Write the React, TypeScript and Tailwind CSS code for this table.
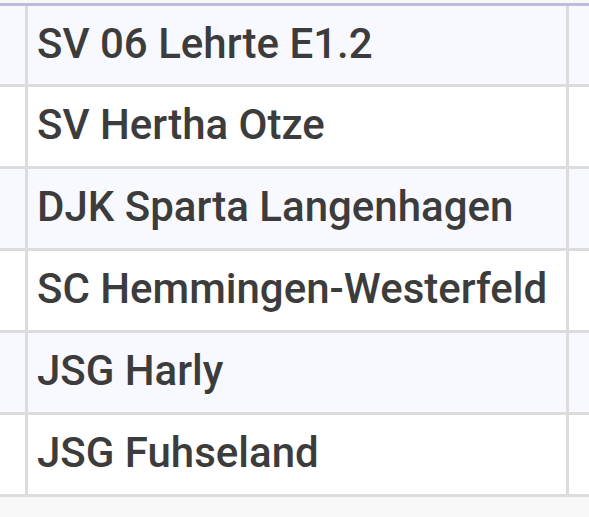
const teams = [
  'SV 06 Lehrte E1.2',
  'SV Hertha Otze',
  'DJK Sparta Langenhagen',
  'SC Hemmingen-Westerfeld',
  'JSG Harly',
  'JSG Fuhseland',
];

export default function App() {
  return (
    <div className="w-[589px] h-[517px] overflow-hidden bg-[#f8f8f8] pt-[3px] font-['Roboto',sans-serif]">
      <div className="border-t-[3px] border-[#bcbcde]">
        {teams.map((name, i) => (
          <div
            key={name}
            className={`flex border-b-[3px] border-[#dcdcdc] ${i === 0 ? 'h-[81px]' : 'h-[82px]'} ${i % 2 === 0 ? 'bg-[#f8f9fe]' : 'bg-white'}`}
          >
            <div className="w-[28px] shrink-0 border-r-[3px] border-[#dcdcdc]" />
            <div className="w-[541px] shrink-0 border-r-[3px] border-[#dcdcdc] flex items-center pl-[9px] pb-[3px]">
              <span className="text-[42px] font-medium text-[#3c3c3c] leading-none whitespace-nowrap">{name}</span>
            </div>
            <div className="flex-1" />
          </div>
        ))}
      </div>
    </div>
  );
}
